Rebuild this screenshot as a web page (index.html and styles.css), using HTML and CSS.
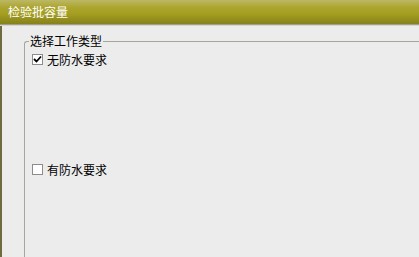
FILE: index.html
```html
<!DOCTYPE html>
<html lang="zh">
<head>
<meta charset="utf-8">
<title>检验批容量</title>
<link rel="stylesheet" href="styles.css">
</head>
<body>
<div class="window">
  <div class="titlebar"><span class="title">检验批容量</span></div>
  <div class="content">
    <fieldset class="group">
      <legend class="legend">选择工作类型</legend>
      <label class="option first">
        <span class="box"><svg width="9" height="9" viewBox="0 0 9 9"><path d="M1 4 L3.5 6.5 L8 1.5" fill="none" stroke="#000" stroke-width="1.8"/></svg></span>
        <span class="text">无防水要求</span>
      </label>
      <label class="option second">
        <span class="box"></span>
        <span class="text">有防水要求</span>
      </label>
    </fieldset>
  </div>
</div>
</body>
</html>
```
FILE: styles.css
```css
html, body {
  margin: 0;
  padding: 0;
  width: 419px;
  height: 257px;
  overflow: hidden;
}
body {
  font-family: "Noto Sans CJK SC", "Liberation Sans", sans-serif;
  font-size: 12px;
  color: #000;
  background: #ececec;
}
.window {
  height: 257px;
  display: flex;
  flex-direction: column;
  border-left: 2px solid #6e6b3e;
  box-sizing: border-box;
}
.titlebar {
  flex: 0 0 24px;
  height: 24px;
  background: linear-gradient(#bcb865 0%, #aca630 30%, #a39d1f 60%, #86811c 100%);
  border-bottom: 1px solid #a09e88;
  box-shadow: 0 1px 0 #d6d6cf;
  display: flex;
  align-items: center;
  margin-left: -2px;
  padding-left: 8px;
}
.title {
  color: #fff;
  font-size: 12px;
  line-height: 14px;
}
.content {
  flex: 1 1 auto;
  min-height: 0;
  overflow: hidden;
  padding: 9px 0 0 22px;
}
.group {
  margin: 0;
  padding: 0 0 0 7px;
  border: 1px solid #a6a69c;
  border-right: none;
  border-bottom: none;
  border-top-left-radius: 3px;
  height: 230px;
  box-sizing: border-box;
  display: flex;
  flex-direction: column;
}
.legend {
  padding: 0 1px;
  margin-left: -3px;
  font-size: 12px;
  line-height: 14px;
}
.option {
  display: flex;
  align-items: center;
  gap: 4px;
  height: 13px;
}
.option.first {
  margin-top: 5px;
}
.option.second {
  margin-top: 97px;
}
.box {
  width: 9px;
  height: 9px;
  border: 1px solid #8c8c8c;
  background: #fff;
  display: flex;
  align-items: center;
  justify-content: center;
}
.box svg {
  display: block;
}
.text {
  line-height: 13px;
}
```
